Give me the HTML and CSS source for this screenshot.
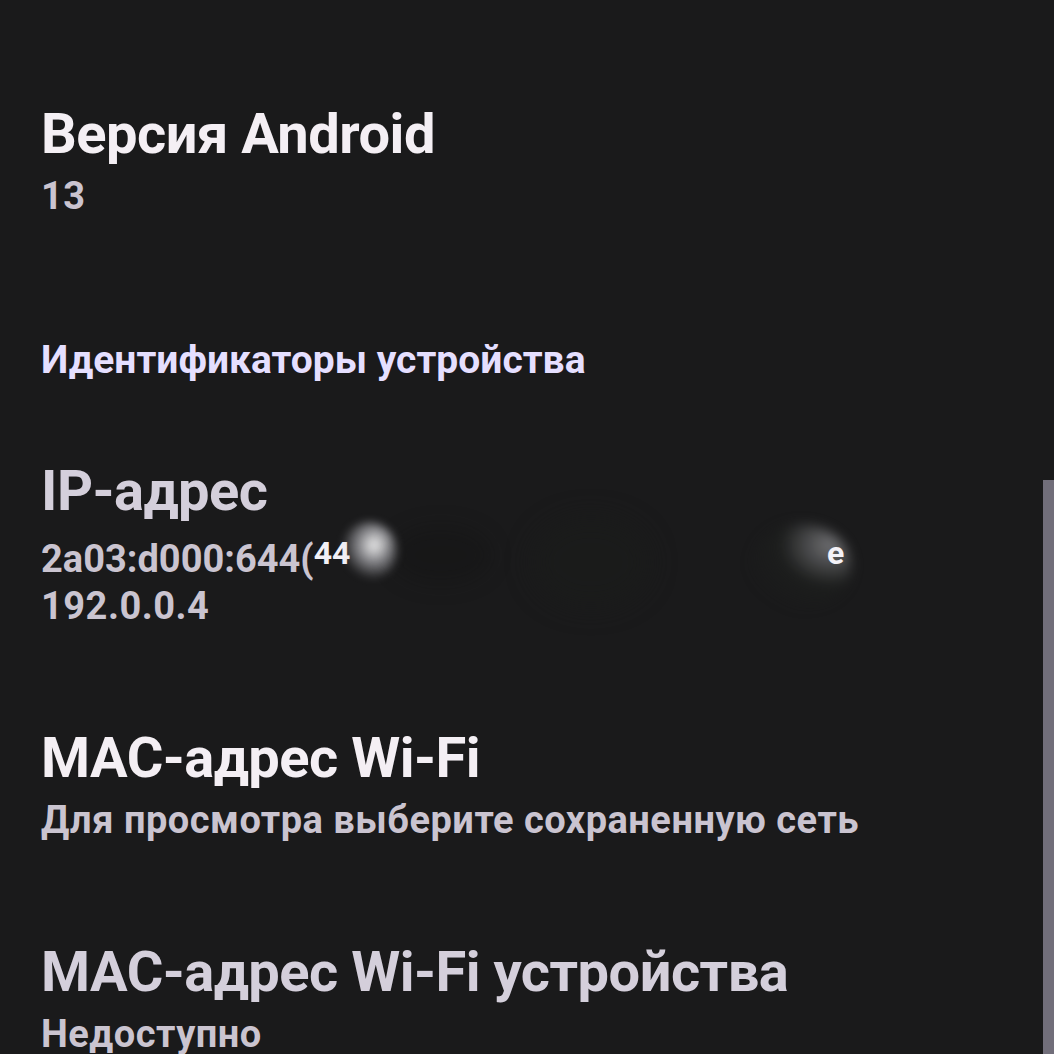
FILE: index.html
```html
<!DOCTYPE html>
<html lang="ru">
<head>
  <meta charset="UTF-8" />
  <meta name="viewport" content="width=device-width, initial-scale=1.0"/>
  <title>О телефоне</title>
  <link rel="stylesheet" href="styles.css">
</head>
<body>
  <div class="prefs">
    <div class="pref">
      <div class="pref-title">Версия Android</div>
      <div class="pref-summary">13</div>
    </div>

    <div class="category">Идентификаторы устройства</div>

    <div class="pref disabled">
      <div class="pref-title">IP-адрес</div>
      <div class="pref-summary">
        <div class="ip-line">2a03:d000:644(<span class="ip-peek">44</span><span class="smudge glow"></span><span class="smudge shade-a"></span><span class="smudge shade-b"></span><span class="smudge shade-c"></span><span class="ip-tail">e</span></div>
        <div>192.0.0.4</div>
      </div>
    </div>

    <div class="pref">
      <div class="pref-title">MAC-адрес Wi-Fi</div>
      <div class="pref-summary">Для просмотра выберите сохраненную сеть</div>
    </div>

    <div class="pref disabled">
      <div class="pref-title">MAC-адрес Wi-Fi устройства</div>
      <div class="pref-summary">Недоступно</div>
    </div>
  </div>

  <div class="scrollbar"></div>
</body>
</html>
```

FILE: styles.css
```css
:root {
  --bg: #1a1a1b;
  --title: #f4eff4;
  --title-dim: #d4cfdb;
  --summary: #cac4d0;
  --accent: #e5dfff;
  --thumb: #716e7a;
}

html, body {
  margin: 0;
  height: 100%;
  overflow: hidden;
}

body {
  background: var(--bg);
  font-family: Roboto, "Noto Sans", sans-serif;
  font-weight: 700;
  padding-top: 102px;
  box-sizing: border-box;
}

.prefs {
  display: flex;
  flex-direction: column;
}

.pref {
  padding: 48px 41px;
}

.pref:first-child {
  padding-top: 0;
}

.pref-title {
  font-size: 56px;
  line-height: 64px;
  letter-spacing: -0.5px;
  color: var(--title);
  white-space: nowrap;
}

.pref-summary {
  margin-top: 7px;
  font-size: 38px;
  line-height: 47px;
  letter-spacing: 0.5px;
  color: var(--summary);
  white-space: nowrap;
}

.disabled .pref-title {
  color: var(--title-dim);
}

.category {
  padding: 68px 41px 27px;
  font-size: 39px;
  line-height: 48px;
  color: var(--accent);
}

/* partially hidden address */
.ip-line {
  position: relative;
  letter-spacing: 0;
}

.ip-peek {
  color: #f2f0f6;
  font-size: 32px;
  vertical-align: 8px;
}

.smudge {
  position: absolute;
  border-radius: 50%;
}

.glow {
  left: 300px;
  top: -8px;
  width: 56px;
  height: 58px;
  background: radial-gradient(ellipse at 60% 40%, rgba(255,255,255,0.95) 0%, rgba(215,215,222,0.55) 35%, rgba(26,26,28,0) 70%);
  filter: blur(4px);
}

.shade-a {
  left: 350px;
  top: -4px;
  width: 100px;
  height: 58px;
  background: rgba(16,16,18,0.3);
  filter: blur(10px);
}

.shade-b {
  left: 490px;
  top: -14px;
  width: 120px;
  height: 92px;
  background: rgba(26,29,27,0.6);
  filter: blur(12px);
}

.shade-c {
  left: 710px;
  top: -6px;
  width: 100px;
  height: 84px;
  background: radial-gradient(ellipse at 80% 25%, rgba(200,200,205,0.5) 0%, rgba(30,32,30,0.6) 45%, rgba(26,26,28,0) 80%);
  filter: blur(6px);
}

.ip-tail {
  position: absolute;
  left: 786px;
  top: 0;
  color: #f4f2f8;
  font-size: 32px;
}

.scrollbar {
  position: absolute;
  right: 0;
  top: 480px;
  width: 11px;
  bottom: 0;
  background: var(--thumb);
}
```
